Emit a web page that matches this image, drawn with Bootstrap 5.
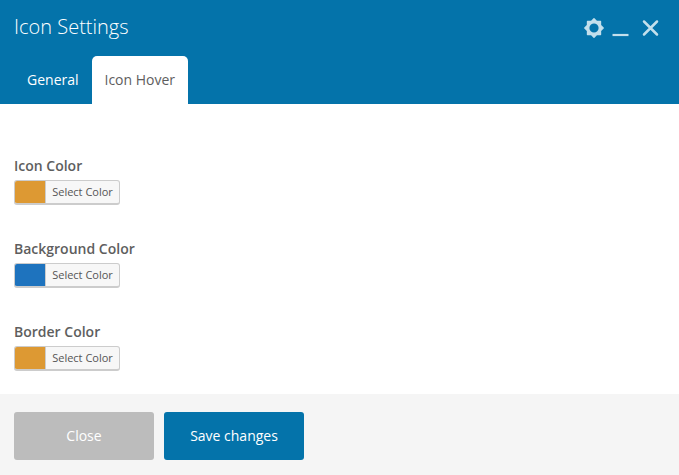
<!DOCTYPE html>
<html lang="en">
<head>
<meta charset="utf-8">
<meta name="viewport" content="width=device-width, initial-scale=1">
<title>Icon Settings</title>
<link href="https://cdn.jsdelivr.net/npm/bootstrap@5.3.0/dist/css/bootstrap.min.css" rel="stylesheet">
<style>
body{font-family:"Open Sans",sans-serif;color:#5e5e5e;font-size:14px;overflow:hidden}
.panel{height:475px}
.panel-top{background:#0473aa;height:104px;padding-left:14px}
.panel-title{font-size:20px;font-weight:300;line-height:28px;padding-top:13px}
.tools{padding:14px 16px 0 0}
.panel-tabs .nav-link{height:48px;line-height:48px;padding:0 12px;border-radius:5px 5px 0 0;color:#fff;font-weight:500}
.panel-tabs .nav-link:first-child{padding-left:13px;width:78px}
.panel-tabs .nav-link.active{background:#fff;color:#5e5e5e;font-weight:400;width:96px;padding:0 0 0 12.5px}
.fields{padding:52px 14px 0;min-height:0}
.field{height:83px}
.field:last-child{height:auto}
.field-name{font-weight:600;line-height:20px;margin-bottom:4px;display:block}
.picker{width:106px;height:25px;border:1px solid #ccc;border-bottom-width:2px;border-radius:3px;background:#f7f7f7;overflow:hidden;padding:0;color:#555;font-size:11px;line-height:22px}
.swatch{width:30px;height:22px}
.picker-text{border-left:1px solid #ccc;width:74px;height:22px}
.amber{background:#dd9933}
.blue{background:#1e73be}
.panel-foot{background:#f5f5f5;height:81px;padding:18px 14px 0;gap:10px}
.action{width:140px;height:48px;border:0;border-radius:3px;font-size:14px;font-weight:400;color:#fff;padding:0 0 2px}
.action,.action:hover{color:#fff}
.quiet,.quiet:hover{background:#bcbcbc}
.save,.save:hover{background:#0473aa;font-weight:500}
</style>
</head>
<body>
<div class="panel d-flex flex-column">
  <header class="panel-top d-flex flex-column flex-shrink-0 justify-content-between">
    <div class="d-flex justify-content-between">
      <h1 class="panel-title text-white m-0">Icon Settings</h1>
      <div class="tools">
        <svg class="d-block" width="80" height="28" viewBox="0 0 80 28" fill="none" stroke="#c3dfec">
          <g transform="translate(11 14)">
            <path d="M9.2 0L6.47 2.68L6.5 6.5L2.68 6.47L0 9.2L-2.68 6.47L-6.5 6.5L-6.47 2.68L-9.2 0L-6.47-2.68L-6.5-6.5L-2.68-6.47L0-9.2L2.68-6.47L6.5-6.5L6.47-2.68Z M5.3 0A5.3 5.3 0 1 0-5.3 0A5.3 5.3 0 1 0 5.3 0Z" fill="#c3dfec" fill-rule="evenodd" stroke-width="1.4" stroke-linejoin="round"/>
          </g>
          <path d="M29.5 21H45.5" stroke-width="2.2"/>
          <path d="M61 7.5L74 20.5M74 7.5L61 20.5" stroke-width="2.5" stroke-linecap="round"/>
        </svg>
      </div>
    </div>
    <nav class="nav panel-tabs">
      <a class="nav-link" href="#">General</a>
      <a class="nav-link active" href="#">Icon Hover</a>
    </nav>
  </header>
  <main class="fields flex-grow-1">
    <div class="field">
      <span class="field-name">Icon Color</span>
      <button class="picker d-flex" type="button"><span class="swatch amber"></span><span class="picker-text text-center">Select Color</span></button>
    </div>
    <div class="field">
      <span class="field-name">Background Color</span>
      <button class="picker d-flex" type="button"><span class="swatch blue"></span><span class="picker-text text-center">Select Color</span></button>
    </div>
    <div class="field">
      <span class="field-name">Border Color</span>
      <button class="picker d-flex" type="button"><span class="swatch amber"></span><span class="picker-text text-center">Select Color</span></button>
    </div>
  </main>
  <footer class="panel-foot d-flex flex-shrink-0">
    <button class="btn action quiet" type="button">Close</button>
    <button class="btn action save" type="button">Save changes</button>
  </footer>
</div>
<script src="https://cdn.jsdelivr.net/npm/bootstrap@5.3.0/dist/js/bootstrap.bundle.min.js"></script>
</body>
</html>
